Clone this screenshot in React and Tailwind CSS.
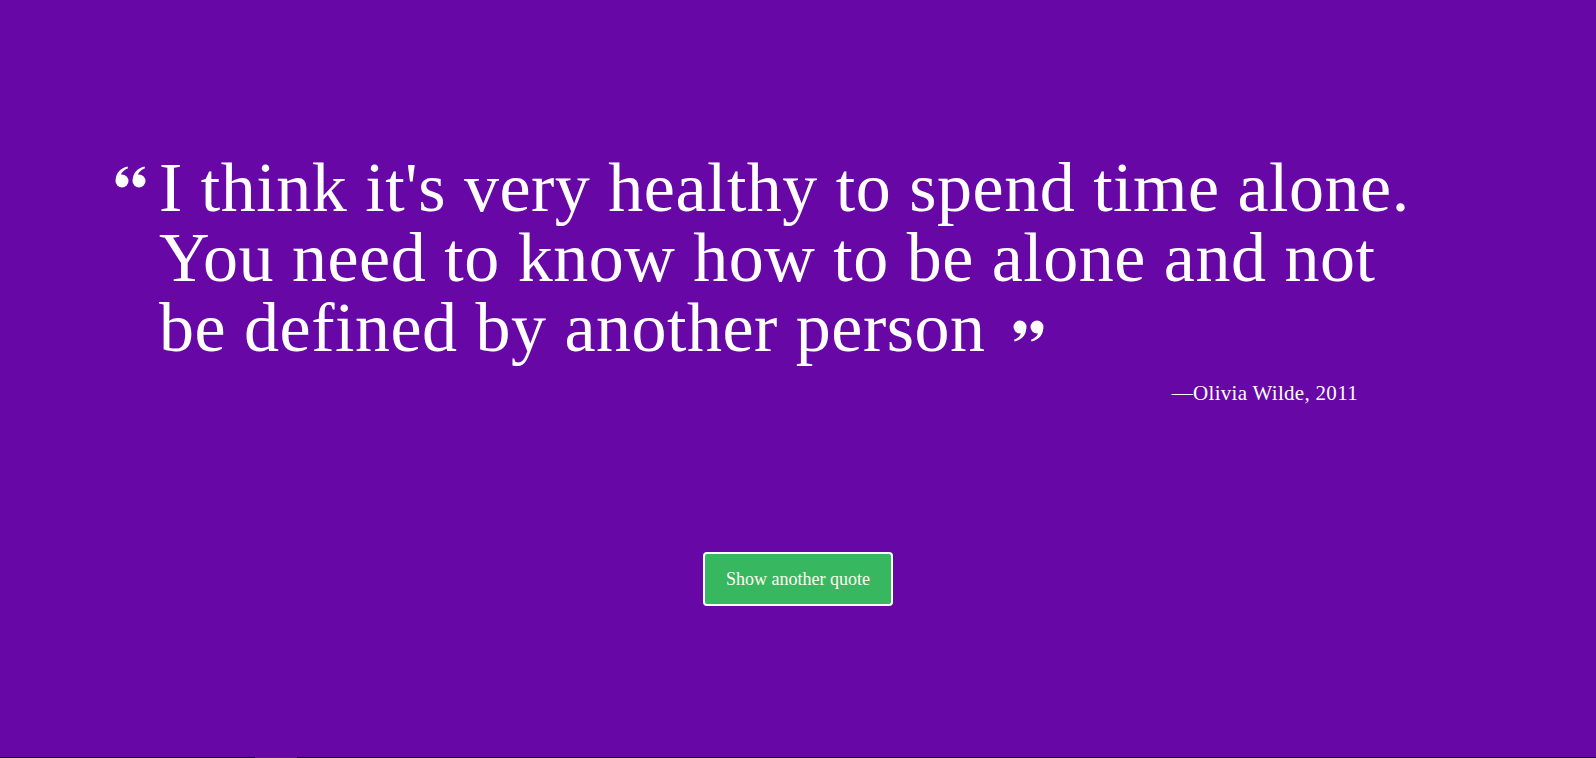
function QuoteMark({ flip = false }) {
  return (
    <svg width="32" height="22" viewBox="0 0 32 22" className={flip ? "rotate-180" : ""} fill="#ffffff">
      <circle cx="7" cy="15" r="6.5" />
      <path d="M0.8 14 C0.8 7 5 2.5 12.5 0.5 L13 2.2 C8.5 4 6 7 6 9.5 Z" />
      <circle cx="24" cy="15" r="6.5" />
      <path d="M17.8 14 C17.8 7 22 2.5 29.5 0.5 L30 2.2 C25.5 4 23 7 23 9.5 Z" />
    </svg>
  );
}

export default function App() {
  return (
    <div className="w-full h-[758px] flex flex-col bg-black overflow-hidden" style={{ fontFamily: '"Liberation Serif", serif' }}>
      <div className="flex-1 bg-[#6607a6] flex flex-col">
        {/* Quote */}
        <div className="pt-[153px] pl-[115px] w-[1358px]">
          <div className="flex items-start">
            <div className="w-[44px] shrink-0 pt-[13px]">
              <QuoteMark />
            </div>
            <p className="whitespace-nowrap text-[70px] leading-[70px] text-white tracking-[0.5px]">
              I think it's very healthy to spend time alone.
              <br />
              You need to know how to be alone and not
              <br />
              be defined by another person
              <span className="inline-block ml-[26px] align-[9px]">
                <QuoteMark flip />
              </span>
            </p>
          </div>
          <div className="mt-[16px] text-right text-[21px] leading-[28px] tracking-[0.3px] text-white">—Olivia Wilde, 2011</div>
        </div>

        {/* Button */}
        <div className="mt-[145px] flex justify-center">
          <button className="w-[190px] h-[54px] rounded-[4px] border-2 border-white bg-[#38b761] text-[18px] text-[#fffff0]">
            Show another quote
          </button>
        </div>
      </div>
      <div className="h-px flex">
        <div className="w-[255px]" />
        <div className="w-[42px] bg-[#3a3a3a]" />
      </div>
    </div>
  );
}
